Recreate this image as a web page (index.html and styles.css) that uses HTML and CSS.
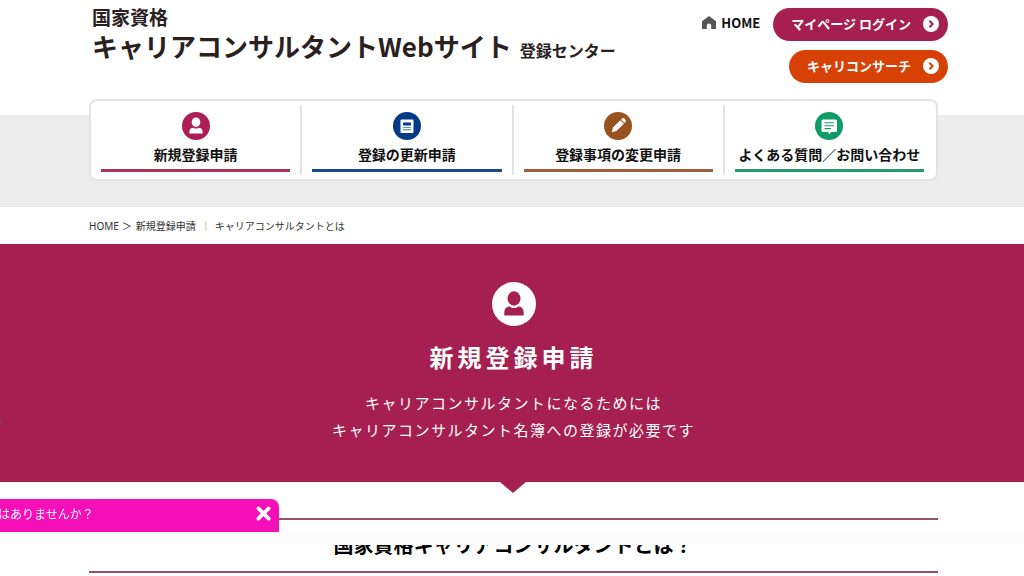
FILE: index.html
```html
<!DOCTYPE html>
<html lang="ja">
<head>
<meta charset="utf-8">
<meta name="viewport" content="width=device-width, initial-scale=1">
<title>キャリアコンサルタントWebサイト 登録センター</title>
<link rel="stylesheet" href="styles.css">
</head>
<body>
<header class="header shell">
  <div class="logo">
    <div class="logo-top">国家資格</div>
    <div class="logo-main">キャリアコンサルタントWebサイト<span class="logo-sub">登録センター</span></div>
  </div>
  <div class="tools">
    <a class="home" href="#">
      <svg class="home-icon" viewBox="0 0 14 13" aria-hidden="true"><path d="M7 0 0 5.2V13h4.800V9.600a2.200 2.200 0 0 1 4.400 0V13H14V5.200z" fill="#555"/></svg>
      HOME
    </a>
    <div class="buttons">
      <a class="pill pill-login" href="#">マイページ ログイン
        <svg class="pill-icon" viewBox="0 0 16 16" aria-hidden="true"><circle cx="8" cy="8" r="8" fill="#fff"/><path d="M6.400 4.800 9.600 8l-3.200 3.200" fill="none" stroke="#a52050" stroke-width="2"/></svg>
      </a>
      <a class="pill pill-search" href="#">キャリコンサーチ
        <svg class="pill-icon" viewBox="0 0 16 16" aria-hidden="true"><circle cx="8" cy="8" r="8" fill="#fff"/><path d="M6.400 4.800 9.600 8l-3.200 3.200" fill="none" stroke="#d74106" stroke-width="2"/></svg>
      </a>
    </div>
  </div>
</header>

<div class="nav-band shell">
  <nav class="nav">
    <a class="nav-item" href="#">
      <span class="nav-body nav-new">
        <svg class="nav-icon" viewBox="0 0 28 28" aria-hidden="true"><circle cx="14" cy="14" r="14" fill="#ac1f56"/><ellipse cx="14" cy="10.200" rx="4.300" ry="4.800" fill="#fff"/><path d="M7.400 21.500v-1.800c0-2.600 1.600-4 4-4 1.500 1.200 3.700 1.200 5.200 0 2.400 0 4 1.400 4 4v1.800z" fill="#fff"/></svg>
        新規登録申請
      </span>
    </a>
    <a class="nav-item" href="#">
      <span class="nav-body nav-renew">
        <svg class="nav-icon" viewBox="0 0 28 28" aria-hidden="true"><circle cx="14" cy="14" r="14" fill="#053a86"/><rect x="7.500" y="7.500" width="13" height="13.500" rx="1" fill="#fff"/><path d="M10 10.500h8v3h-8z" fill="#053a86"/><path d="M10 15.500h8M10 17.700h8" stroke="#6d90bd" stroke-width="1.200"/></svg>
        登録の更新申請
      </span>
    </a>
    <a class="nav-item" href="#">
      <span class="nav-body nav-change">
        <svg class="nav-icon" viewBox="0 0 28 28" aria-hidden="true"><circle cx="14" cy="14" r="14" fill="#98521f"/><g transform="rotate(45 14 14)" fill="#fff"><path d="M11.500 8.200h5v10.500L14 22.800l-2.500-4.100z"/><path d="M11.500 7.200V6.500a2.500 2.500 0 0 1 5 0v.7z"/></g></svg>
        登録事項の変更申請
      </span>
    </a>
    <a class="nav-item" href="#">
      <span class="nav-body nav-faq">
        <svg class="nav-icon" viewBox="0 0 28 28" aria-hidden="true"><circle cx="14" cy="14" r="14" fill="#0f9b68"/><path d="M8 7.500h12.500a1.500 1.500 0 0 1 1.500 1.500v9.500a1.500 1.500 0 0 1-1.500 1.500H16l-1.500 2.500L13 20H8a1.500 1.500 0 0 1-1.500-1.500V9A1.500 1.500 0 0 1 8 7.500z" fill="#fff"/><path d="M9.500 10.800h9.500M9.500 13.700h9.500M9.500 16.600h6.500" stroke="#0f9b68" stroke-width="1.100"/></svg>
        よくある質問／お問い合わせ
      </span>
    </a>
  </nav>
</div>

<div class="breadcrumb shell">
  <a href="#">HOME</a><span class="crumb-arrow">＞</span><a href="#">新規登録申請</a><span class="crumb-bar">｜</span><span>キャリアコンサルタントとは</span>
</div>

<section class="hero">
  <svg class="hero-icon" viewBox="0 0 44 44" aria-hidden="true"><circle cx="22" cy="22" r="22" fill="#fff"/><ellipse cx="22" cy="16.500" rx="6.500" ry="7.200" fill="#a52050"/><path d="M12.300 33.500v-2.700c0-4 2-6.300 5.400-6.300 2.500 2 6.100 2 8.600 0 3.400 0 5.400 2.300 5.400 6.300v2.700z" fill="#a52050"/></svg>
  <h1 class="hero-title">新規登録申請</h1>
  <p class="hero-text">キャリアコンサルタントになるためには<br>キャリアコンサルタント名簿への登録が必要です</p>
</section>

<main class="content shell">
  <h2 class="section-title">国家資格キャリアコンサルタントとは？</h2>
</main>

<span class="edge-dot"></span>
<aside class="notice">
  <div class="notice-box">
    <span>はありませんか？</span>
    <button class="notice-close" type="button" aria-label="閉じる">
      <svg class="close-icon" viewBox="0 0 14 14" aria-hidden="true"><path d="M2.200 2.200l9.600 9.600M11.800 2.200l-9.600 9.600" stroke="#fff" stroke-width="3.400" stroke-linecap="round"/></svg>
    </button>
  </div>
  <div class="notice-strip"></div>
</aside>
</body>
</html>
```
FILE: styles.css
```css
* { box-sizing: border-box; }

body {
  margin: 0;
  background: #fff;
  color: #111;
  font-family: "Noto Sans", "Noto Sans CJK JP", sans-serif;
  overflow: hidden;
}

a { color: inherit; text-decoration: none; }
svg { display: block; flex: none; }

.shell { padding-left: 89px; padding-right: 86px; }

.header {
  display: flex;
  justify-content: space-between;
  padding-right: 76px;
  height: 99px;
}

.logo {
  padding: 6px 0 0 3px;
  color: #2a211f;
  font-family: "Noto Sans CJK JP", sans-serif;
  font-weight: 700;
  white-space: nowrap;
}
.logo-top { font-size: 19px; line-height: 22px; }
.logo-main { font-size: 26px; line-height: 36px; }
.logo-sub { margin-left: 8px; font-size: 16px; }

.tools { display: flex; gap: 13px; padding-top: 8px; }
.home {
  display: flex;
  align-items: center;
  gap: 5px;
  height: 28px;
  font-size: 13px;
  font-weight: 700;
  font-family: "Noto Sans CJK JP", sans-serif;
}
.home-icon { width: 14px; height: 13px; }

.buttons { display: flex; flex-direction: column; align-items: flex-end; gap: 9px; }
.pill {
  display: flex;
  align-items: center;
  gap: 12px;
  height: 33px;
  padding: 0 9px 2px 18px;
  border-radius: 17px;
  color: #fff;
  font-size: 13px;
  font-weight: 700;
  font-family: "Noto Sans CJK JP", sans-serif;
  white-space: nowrap;
}
.pill-login { background: #a52050; }
.pill-search { background: #d74106; }
.pill-icon { width: 16px; height: 16px; }

.nav-band {
  padding-bottom: 26px;
  background: linear-gradient(#fff 16px, #ededed 16px);
}
.nav {
  display: grid;
  grid-template-columns: repeat(4, 1fr);
  padding: 4px 0;
  background: #fff;
  border: 2px solid #e2e4e4;
  border-radius: 8px;
}
.nav-item { padding: 0 10px; border-right: 2px solid #e2e2e2; }
.nav-item:last-child { border-right-color: transparent; }
.nav-body {
  display: flex;
  flex-direction: column;
  align-items: center;
  gap: 4px;
  margin-bottom: 3px;
  padding-top: 7px;
  border-bottom: 3px solid;
  height: 67px;
  font-size: 14px;
  font-weight: 700;
  font-family: "Noto Sans CJK JP", sans-serif;
  line-height: 20px;
  white-space: nowrap;
}
.nav-icon { width: 28px; height: 28px; }
.nav-new { border-color: #a83358; }
.nav-renew { border-color: #174a88; }
.nav-change { border-color: #9e6036; }
.nav-faq { border-color: #24996b; }

.breadcrumb {
  display: flex;
  align-items: center;
  height: 37px;
  color: #333;
  font-size: 10px;
}
.crumb-arrow { margin: 0 4px 0 3px; }
.crumb-bar { margin: 0 4px 0 5px; color: #777; }

.hero {
  position: relative;
  display: flex;
  flex-direction: column;
  align-items: center;
  padding: 38px 0 39px 3px;
  background: #a52050;
  color: #fff;
  text-align: center;
  font-family: "Noto Sans CJK JP", sans-serif;
}
.hero::after {
  content: "";
  position: absolute;
  top: 100%;
  left: 50%;
  margin-left: -12px;
  border: 13px solid transparent;
  border-top: 11px solid #a52050;
  border-bottom: 0;
}
.hero-icon { width: 44px; height: 44px; }
.hero-title {
  margin: 13px 0 14px;
  font-size: 24px;
  font-weight: 700;
  line-height: 36px;
  letter-spacing: 4px;
}
.hero-text {
  margin: 0;
  font-size: 15px;
  font-weight: 400;
  line-height: 27px;
  letter-spacing: 0.1em;
}

.content { padding-top: 36px; }
.section-title {
  margin: 0;
  padding: 10px 0 11px;
  border: solid #98506c;
  border-width: 2px 0;
  color: #000;
  font-size: 20px;
  line-height: 30px;
  text-align: center;
  font-family: "Noto Sans CJK JP", sans-serif;
}

.edge-dot {
  position: fixed;
  left: -4px;
  top: 418px;
  width: 5px;
  height: 7px;
  border-radius: 50%;
  background: #664a94;
}

.notice { position: fixed; left: 0; right: 0; bottom: 31px; }
.notice-box {
  display: flex;
  align-items: center;
  justify-content: space-between;
  width: 281px;
  height: 33px;
  margin-left: -2px;
  padding: 0 8px 4px 0;
  border-radius: 0 8px 0 0;
  background: #f50fb8;
  color: #fff;
  font-size: 12px;
}
.notice-close { padding: 0; border: 0; background: none; cursor: pointer; }
.close-icon { width: 15px; height: 15px; }
.notice-strip { height: 13px; background: #fbfbfb; }
```
